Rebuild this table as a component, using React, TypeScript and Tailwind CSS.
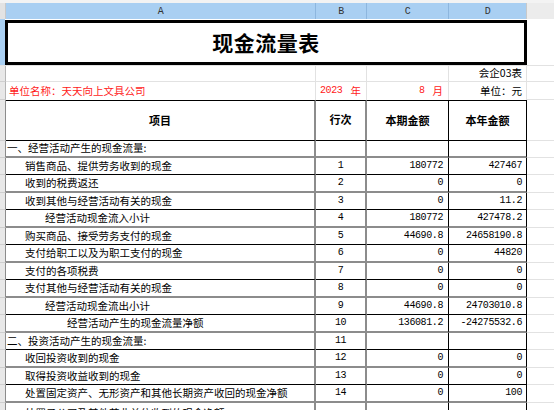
const cjk = { fontFamily: '"Noto Sans CJK SC", "Liberation Sans", sans-serif' };

type Row = { label: string; indent: number; no?: string; c?: string; d?: string };

const rows: Row[] = [
  { label: "一、经营活动产生的现金流量:", indent: 0 },
  { label: "销售商品、提供劳务收到的现金", indent: 1, no: "1", c: "180772", d: "427467" },
  { label: "收到的税费返还", indent: 1, no: "2", c: "0", d: "0" },
  { label: "收到其他与经营活动有关的现金", indent: 1, no: "3", c: "0", d: "11.2" },
  { label: "经营活动现金流入小计", indent: 2, no: "4", c: "180772", d: "427478.2" },
  { label: "购买商品、接受劳务支付的现金", indent: 1, no: "5", c: "44690.8", d: "24658190.8" },
  { label: "支付给职工以及为职工支付的现金", indent: 1, no: "6", c: "0", d: "44820" },
  { label: "支付的各项税费", indent: 1, no: "7", c: "0", d: "0" },
  { label: "支付其他与经营活动有关的现金", indent: 1, no: "8", c: "0", d: "0" },
  { label: "经营活动现金流出小计", indent: 2, no: "9", c: "44690.8", d: "24703010.8" },
  { label: "经营活动产生的现金流量净额", indent: 3, no: "10", c: "136081.2", d: "-24275532.6" },
  { label: "二、投资活动产生的现金流量:", indent: 0, no: "11" },
  { label: "收回投资收到的现金", indent: 1, no: "12", c: "0", d: "0" },
  { label: "取得投资收益收到的现金", indent: 1, no: "13", c: "0", d: "0" },
  { label: "处置固定资产、无形资产和其他长期资产收回的现金净额", indent: 1, no: "14", c: "0", d: "100" },
  { label: "处置子公司及其他营业单位收到的现金净额", indent: 1 },
];

const heights = ["h-[17px]", "h-[17px]", "h-[18px]", "h-[17px]", "h-[18px]", "h-[17px]", "h-[18px]", "h-[17px]", "h-[18px]", "h-[17px]", "h-[18px]", "h-[17px]", "h-[18px]", "h-[17px]", "h-[18px]", "h-[22px]"];
const indents = ["pl-[1px]", "pl-[19px]", "pl-[39px]", "pl-[61px]"];

const num = "font-['Liberation_Mono',monospace] text-[10px] tracking-[-0.4px]";

export default function App() {
  return (
    <div className="w-[554px] h-[410px] overflow-hidden bg-white text-black" style={cjk}>
      {/* column headers */}
      <div className="h-[3px] bg-[#f3f3f3]" />
      <div className={`flex h-[16px] text-[9px] text-[#333] ${num}`}>
        <div className="w-[6px] bg-[#e3e3e3] border-r border-[#c9c9c9]" />
        <div className="w-[310px] bg-[#a9cff2] border-r border-[#8db6de] flex items-center justify-center">A</div>
        <div className="w-[51px] bg-[#a9cff2] border-r border-[#8db6de] flex items-center justify-center">B</div>
        <div className="w-[82px] bg-[#a9cff2] border-r border-[#8db6de] flex items-center justify-center">C</div>
        <div className="w-[78px] bg-[#a9cff2] border-r border-[#c9c9c9] flex items-center justify-center">D</div>
        <div className="flex-1 bg-[#ececec]" />
      </div>

      {/* title row */}
      <div className="flex h-[47px] border-b border-[#e2e2e2]">
        <div className="w-[5px] bg-[#a9cff2]" />
        <div className="w-[522px] pt-[1px]">
          <div className="h-[45px] border-[3px] border-black flex items-center justify-center text-[21px] font-bold tracking-[0.5px]">
            现金流量表
          </div>
        </div>
        <div className="flex-1" />
      </div>

      {/* 会企03表 */}
      <div className="flex h-[16px] text-[10.5px] leading-none">
        <div className="w-[6px] bg-[#e8e8e8] border-r border-[#b5b5b5] border-b border-b-[#cfcfcf]" />
        <div className="w-[310px] border-r border-b border-[#e2e2e2]" />
        <div className="w-[51px] border-r border-b border-[#e2e2e2]" />
        <div className="w-[82px] border-r border-b border-[#e2e2e2]" />
        <div className="w-[78px] border-r border-b border-[#e2e2e2] flex items-center justify-end pr-[4px]">会企03表</div>
        <div className="flex-1 border-b border-[#e2e2e2]" />
      </div>

      {/* unit row */}
      <div className="flex h-[18px] text-[10.5px] leading-none">
        <div className="w-[6px] bg-[#e8e8e8] border-r border-[#b5b5b5] border-b border-b-[#cfcfcf]" />
        <div className="w-[310px] border-r border-[#e2e2e2] flex items-center pl-[3px] text-[#ff1a1a]">单位名称：天天向上文具公司</div>
        <div className="w-[51px] border-r border-[#e2e2e2] flex items-center pl-[4px] text-[#ff1a1a]">
          <span className={num}>2023</span>
          <span className="ml-[8px]">年</span>
        </div>
        <div className="w-[82px] border-r border-[#e2e2e2] flex items-center justify-end pr-[5px] text-[#ff1a1a]">
          <span className={num}>8</span>
          <span className="ml-[8px]">月</span>
        </div>
        <div className="w-[78px] border-r border-[#e2e2e2] flex items-center justify-end pr-[4px]">单位：元</div>
        <div className="flex-1 border-b border-[#e2e2e2]" />
      </div>

      {/* header row */}
      <div className="flex h-[41px] text-[11px] font-bold">
        <div className="w-[6px] bg-[#e8e8e8] border-r border-[#8c8c8c] border-b border-b-[#cfcfcf]" />
        <div className="w-[310px] border-y border-black border-r-2 border-r-[#8c8c8c] flex items-center justify-center">项目</div>
        <div className="w-[51px] border-y border-black border-r-2 border-r-[#8c8c8c] flex items-center justify-center pb-[3px]">行次</div>
        <div className="w-[82px] border-y border-r border-black flex items-center justify-center">本期金额</div>
        <div className="w-[78px] border-y border-r border-black flex items-center justify-center">本年金额</div>
        <div className="flex-1 border-b border-[#e2e2e2]" />
      </div>

      {rows.map((r, i) => {
        const line = i % 2 === 0 ? "border-b-2 border-b-[#8c8c8c]" : "border-b border-b-black";
        return (
          <div key={i} className={`flex ${heights[i]} text-[10.5px] leading-none`}>
            <div className="w-[6px] bg-[#e8e8e8] border-r border-[#8c8c8c] border-b border-b-[#cfcfcf]" />
            <div className={`w-[310px] ${line} border-r-2 border-r-[#8c8c8c] flex items-center whitespace-nowrap overflow-hidden ${indents[r.indent]}`}>{r.label}</div>
            <div className={`w-[51px] ${line} border-r-2 border-r-[#8c8c8c] flex items-center justify-center ${num}`}>{r.no}</div>
            <div className={`w-[82px] ${line} border-r border-r-black flex items-center justify-end pr-[5px] ${num}`}>{r.c}</div>
            <div className={`w-[78px] ${line} border-r border-r-black flex items-center justify-end pr-[4px] ${num}`}>{r.d}</div>
            <div className="flex-1 border-b border-[#e2e2e2]" />
          </div>
        );
      })}
    </div>
  );
}
